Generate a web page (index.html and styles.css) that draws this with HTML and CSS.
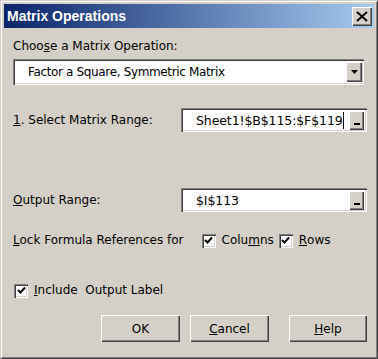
FILE: index.html
```html
<!DOCTYPE html>
<html lang="en">
<head>
    <meta charset="UTF-8">
    <title>Matrix Operations</title>
    <link rel="stylesheet" href="styles.css">
</head>
<body>
    <div class="window">
        <div class="titlebar">
            <span class="title">Matrix Operations</span>
            <button class="close">
                <svg width="12" height="11" viewBox="0 0 12 11"><path d="M1 1 L11 10 M11 1 L1 10" stroke="#000" stroke-width="2"/></svg>
            </button>
        </div>

        <div class="content">
            <div class="label">Choo<u>s</u>e a Matrix Operation:</div>
            <div class="combo">
                <span class="combo-text">Factor a Square, Symmetric Matrix</span>
                <span class="drop">
                    <svg width="7" height="4" viewBox="0 0 7 4"><path d="M0 0 H7 L3.5 4 Z" fill="#000"/></svg>
                </span>
            </div>

            <div class="row range-row">
                <span class="label"><u>1</u>. Select Matrix Range:</span>
                <div class="refbox">
                    <span class="ref-text">Sheet1!$B$115:$F$119<span class="caret"></span></span>
                    <span class="refbtn"><span class="dash"></span></span>
                </div>
            </div>

            <div class="row output-row">
                <span class="label"><u>O</u>utput Range:</span>
                <div class="refbox">
                    <span class="ref-text">$I$113</span>
                    <span class="refbtn"><span class="dash"></span></span>
                </div>
            </div>

            <div class="row lock-row">
                <span class="label"><u>L</u>ock Formula References for</span>
                <label class="check first">
                    <span class="box"><svg width="9" height="9" viewBox="0 0 9 9"><path d="M1 4 L3.5 6.5 L8 1.5" stroke="#000" stroke-width="2" fill="none"/></svg></span>
                    Colu<u>m</u>ns
                </label>
                <label class="check">
                    <span class="box"><svg width="9" height="9" viewBox="0 0 9 9"><path d="M1 4 L3.5 6.5 L8 1.5" stroke="#000" stroke-width="2" fill="none"/></svg></span>
                    <u>R</u>ows
                </label>
            </div>

            <label class="check include">
                <span class="box"><svg width="9" height="9" viewBox="0 0 9 9"><path d="M1 4 L3.5 6.5 L8 1.5" stroke="#000" stroke-width="2" fill="none"/></svg></span>
                <u>I</u>nclude&nbsp; Output Label
            </label>

            <div class="buttons">
                <button class="btn">OK</button>
                <button class="btn"><u>C</u>ancel</button>
                <button class="btn help"><u>H</u>elp</button>
            </div>
        </div>
    </div>
</body>
</html>
```
FILE: styles.css
```css
* {
    box-sizing: border-box;
}

body {
    margin: 0;
    width: 378px;
    height: 359px;
    background: #d4d0c8;
    font-family: "DejaVu Sans", Verdana, sans-serif;
    font-size: 12px;
    line-height: 15px;
    color: #000;
}

.window {
    width: 378px;
    height: 359px;
    background: #d4d0c8;
    border-top: 1px solid #d4d0c8;
    border-left: 1px solid #d4d0c8;
    border-right: 1px solid #404040;
    border-bottom: 1px solid #404040;
    box-shadow: inset 1px 1px 0 #fff, inset -1px -1px 0 #808080;
    padding: 3px;
    display: flex;
    flex-direction: column;
}

.titlebar {
    height: 24px;
    background: linear-gradient(to right, #0a246a, #a6caf0);
    display: flex;
    align-items: center;
    justify-content: space-between;
    padding: 0 2px 0 3px;
}

.title {
    color: #fff;
    font-family: "Liberation Sans", Arial, sans-serif;
    font-weight: bold;
    font-size: 14px;
}

.close {
    width: 20px;
    height: 19px;
    padding: 0;
    background: #d4d0c8;
    border: none;
    box-shadow: inset 1px 1px 0 #fff, inset -1px -1px 0 #404040, inset -2px -2px 0 #808080;
    display: flex;
    align-items: center;
    justify-content: center;
}

.content {
    padding: 11px 7px 0 9px;
    display: flex;
    flex-direction: column;
}

.combo {
    margin-top: 5px;
    height: 26px;
    width: 351px;
    background: #fff;
    box-shadow: inset 1px 1px 0 #808080, inset 2px 2px 0 #404040, inset -1px -1px 0 #fff, inset -2px -2px 0 #d4d0c8;
    display: flex;
    align-items: center;
    justify-content: space-between;
    padding: 0 2px 0 15px;
}

.combo-text {
    letter-spacing: -0.35px;
}

.drop, .refbtn {
    width: 16px;
    height: 20px;
    background: #d4d0c8;
    box-shadow: inset 1px 1px 0 #fff, inset -1px -1px 0 #404040, inset -2px -2px 0 #808080;
    display: flex;
    align-items: center;
    justify-content: center;
}

.row {
    display: flex;
    align-items: center;
}

.range-row {
    margin-top: 23px;
    justify-content: space-between;
}

.refbox {
    width: 186px;
    height: 24px;
    background: #fff;
    box-shadow: inset 1px 1px 0 #808080, inset 2px 2px 0 #404040, inset -1px -1px 0 #fff, inset -2px -2px 0 #d4d0c8;
    display: flex;
    align-items: center;
    justify-content: space-between;
    padding: 0 3px 0 15px;
}

.ref-text {
    font-size: 12.5px;
    letter-spacing: -0.1px;
    display: flex;
    align-items: center;
}

.caret {
    width: 1px;
    height: 17px;
    background: #000;
}

.refbtn {
    width: 15px;
    height: 19px;
    align-items: flex-end;
    padding-bottom: 5px;
}

.dash {
    width: 6px;
    height: 2px;
    background: #000;
}

.output-row {
    margin-top: 56px;
    justify-content: space-between;
}

.lock-row {
    margin-top: 21px;
}

.check {
    display: flex;
    align-items: center;
}

.check.first {
    margin-left: 18px;
    margin-right: 5px;
}

.box {
    width: 14px;
    height: 14px;
    background: #fff;
    box-shadow: inset 1px 1px 0 #808080, inset 2px 2px 0 #404040, inset -1px -1px 0 #fff, inset -2px -2px 0 #d4d0c8;
    display: flex;
    align-items: center;
    justify-content: center;
    margin-right: 6px;
}

.include {
    margin-top: 35px;
    margin-left: 1px;
}

.buttons {
    margin-top: 17px;
    display: flex;
    justify-content: flex-end;
    gap: 10px;
}

.btn {
    width: 79px;
    height: 27px;
    background: #d4d0c8;
    border: none;
    box-shadow: inset 1px 1px 0 #fff, inset -1px -1px 0 #404040, inset -2px -2px 0 #808080;
    font-family: "DejaVu Sans", Verdana, sans-serif;
    font-size: 12px;
    color: #000;
}

.btn.help {
    margin-left: 10px;
    width: 78px;
}
```
